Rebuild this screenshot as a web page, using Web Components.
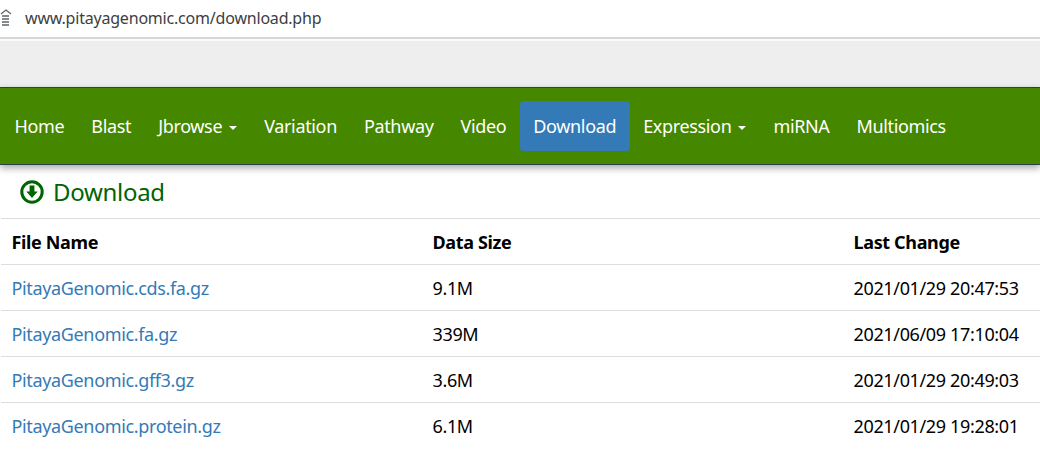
<!DOCTYPE html>
<html><head><meta charset="utf-8">
<style>
html,body{margin:0;padding:0;background:#fff;overflow:hidden}
body{font-family:"Noto Sans","Open Sans",sans-serif;width:1040px;height:462px}
</style></head><body>
<template id="t-bar"><style>
:host{display:flex;flex-direction:column;height:87px}
.addr{height:37px;display:flex;align-items:center;gap:9px;box-sizing:border-box;padding-bottom:1px;background:#fff}
.addr svg{margin-left:-7px;flex:none}
.url{font-size:16px;letter-spacing:-.2px;color:#3c4043}
.line{height:2px;background:#d6d6d6}
.band{flex:1;background:#eee;border-top:2px solid #fafafa}
</style><div class="addr"><svg width="23" height="18" viewBox="0 0 23 18"><path d="M8 5l5-4 5 4M9 7h7M9 10h7M9 13h7M9 16h7" fill="none" stroke="#5f6368" stroke-width="1.3"/></svg><span class="url"><slot></slot></span></div><div class="line"></div><div class="band"></div></template>

<template id="t-nav"><style>
:host{display:flex;align-items:center;box-sizing:border-box;height:78px;background:#458800;border-top:1px solid #2c3e50;border-bottom:1px solid #2c3e50;box-shadow:0 3px 7px rgba(0,0,0,.35);padding-left:1px;position:relative}
</style><slot></slot></template>

<template id="t-item"><style>
:host{display:flex;align-items:center;height:50px;padding:0 13.5px;color:#fff;font-size:18px;letter-spacing:-.35px;border-radius:4px;white-space:nowrap}
:host([active]){background:#337ab7}
.c{display:none;width:0;height:0;border:4.5px solid transparent;border-top-color:#fff;border-bottom:0;margin-left:7px;margin-top:3px}
:host([caret]) .c{display:block}
</style><slot></slot><span class="c"></span></template>

<template id="t-title"><style>
:host{display:flex;align-items:center;gap:9px;height:53px;padding-left:20px;color:#006400;font-size:24px;letter-spacing:-.3px;box-sizing:border-box}
svg{flex:none}
</style><svg width="24" height="24" viewBox="0 0 24 24"><circle cx="12" cy="12" r="10.2" fill="none" stroke="#006400" stroke-width="3"/><path d="M9.6 5.5h4.8v6h3.3L12 18l-5.700-6.500h3.300z" fill="#006400"/></svg><span><slot></slot></span></template>

<template id="t-table"><style>
:host{display:block;margin-left:1px}
</style><slot></slot></template>

<template id="t-row"><style>
:host{display:grid;grid-template-columns:421px 421px 1fr;height:46px;box-sizing:border-box;border-top:1px solid #ddd;align-items:center;padding-left:10.500px;font-size:18px;letter-spacing:-.35px;color:#000;white-space:nowrap}
:host([head]){font-weight:700}
</style><slot></slot></template>

<template id="t-link"><style>
:host{display:block;color:#337ab7}
</style><slot></slot></template>

<pita-bar>www.pitayagenomic.com/download.php</pita-bar>
<pita-nav>
<pita-item>Home</pita-item><pita-item>Blast</pita-item><pita-item caret>Jbrowse</pita-item><pita-item>Variation</pita-item><pita-item>Pathway</pita-item><pita-item>Video</pita-item><pita-item active>Download</pita-item><pita-item caret>Expression</pita-item><pita-item>miRNA</pita-item><pita-item>Multiomics</pita-item>
</pita-nav>
<pita-title>Download</pita-title>
<pita-table>
<pita-row head><span>File Name</span><span>Data Size</span><span>Last Change</span></pita-row>
<pita-row><pita-link>PitayaGenomic.cds.fa.gz</pita-link><span>9.1M</span><span>2021/01/29 20:47:53</span></pita-row>
<pita-row><pita-link>PitayaGenomic.fa.gz</pita-link><span>339M</span><span>2021/06/09 17:10:04</span></pita-row>
<pita-row><pita-link>PitayaGenomic.gff3.gz</pita-link><span>3.6M</span><span>2021/01/29 20:49:03</span></pita-row>
<pita-row><pita-link>PitayaGenomic.protein.gz</pita-link><span>6.1M</span><span>2021/01/29 19:28:01</span></pita-row>
</pita-table>
<script>
for (const [tag,id] of [["pita-bar","t-bar"],["pita-nav","t-nav"],["pita-item","t-item"],["pita-title","t-title"],["pita-table","t-table"],["pita-row","t-row"],["pita-link","t-link"]]) {
  customElements.define(tag, class extends HTMLElement {
    constructor(){super();this.attachShadow({mode:"open"}).appendChild(document.getElementById(id).content.cloneNode(true));}
  });
}
</script>
</body></html>
